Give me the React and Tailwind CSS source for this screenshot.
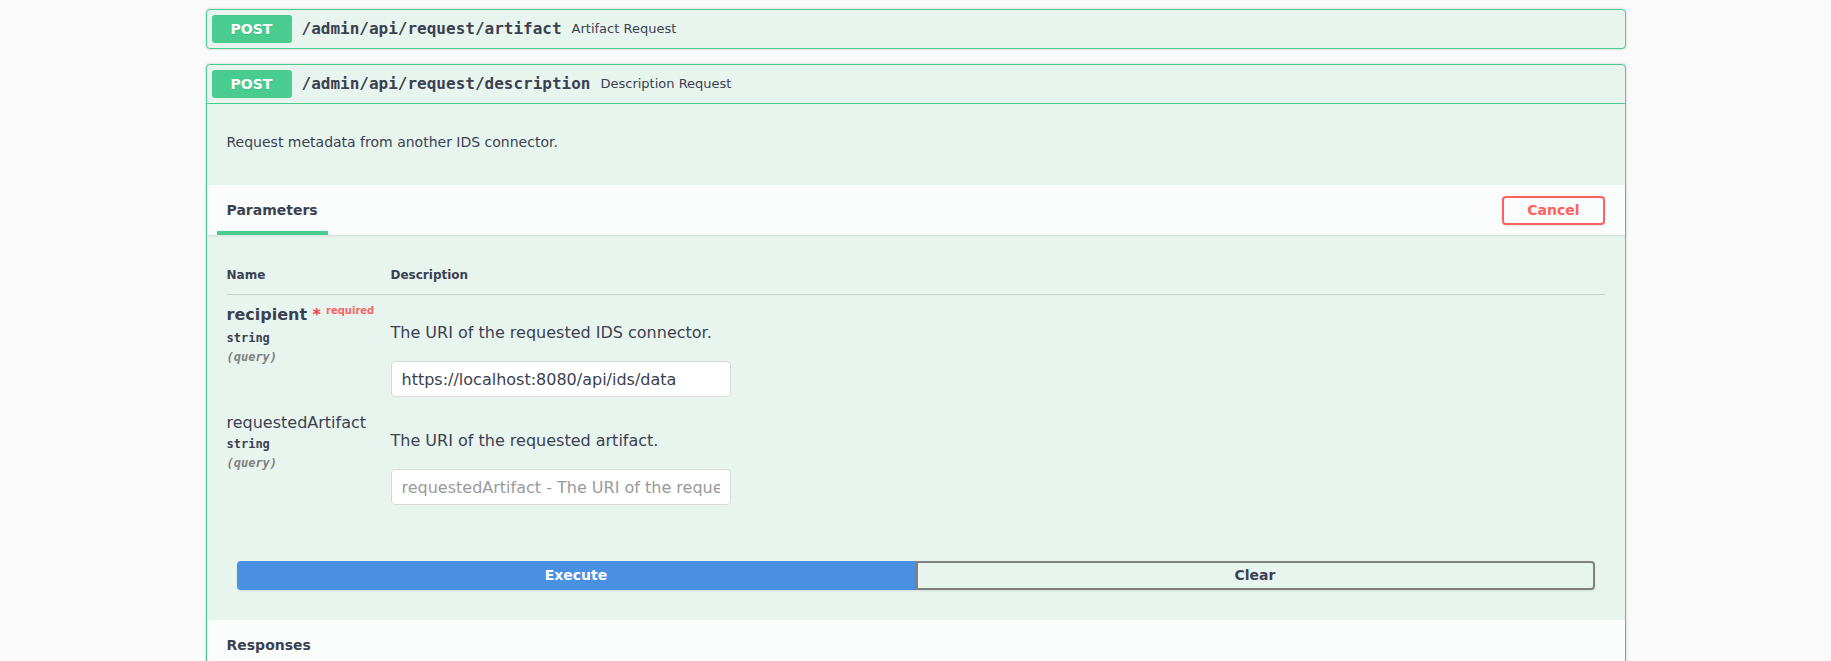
import React from 'react';

const sans = 'font-["DejaVu_Sans",sans-serif]';
const mono = 'font-["DejaVu_Sans_Mono",monospace]';

function Summary({ path, summary, open }) {
  return (
    <div className={`flex items-center p-[5px] ${open ? 'border-b border-[#49cc90]' : ''}`}>
      <span className={`${sans} min-w-[80px] rounded-[3px] bg-[#49cc90] py-[6px] text-center text-[14px] leading-[16px] font-bold text-white [text-shadow:0_1px_0_rgba(0,0,0,0.1)]`}>
        POST
      </span>
      <span className={`${mono} px-[10px] text-[16px] font-bold text-[#3b4151]`}>{path}</span>
      <span className={`${sans} text-[13px] text-[#3b4151]`}>{summary}</span>
    </div>
  );
}

function ParamRow({ name, required, desc, value, placeholder }) {
  return (
    <tr>
      <td className="w-[164px] pt-[10px] align-top">
        <div className={`${sans} text-[16px] leading-[20px] ${required ? 'font-bold' : ''}`}>
          {name}
          {required && (
            <>
              <span className="text-[#f93e3e]">&nbsp;*</span>
              <span className="relative -top-[6px] px-[5px] text-[10px] font-bold text-[#ff0000]/60">required</span>
            </>
          )}
        </div>
        <div className={`${mono} py-[4px] text-[12px] leading-[14px] font-bold`}>string</div>
        <div className={`${mono} text-[12px] leading-[17px] font-bold italic text-[#808080]`}>(query)</div>
      </td>
      <td className="pt-[10px] align-top">
        <p className={`${sans} mt-[18px] mb-[19px] text-[16px] leading-[19px]`}>{desc}</p>
        <input
          type="text"
          defaultValue={value}
          placeholder={placeholder}
          className={`${sans} mt-[5px] mb-[6px] block h-[36px] w-full max-w-[340px] rounded-[4px] border border-[#d9d9d9] bg-white px-[10px] text-[16px] text-[#3b4151] outline-none placeholder:text-[#9a9a9a]`}
        />
      </td>
    </tr>
  );
}

export default function App() {
  return (
    <div className={`min-h-screen bg-[#fafafa] text-[#3b4151] ${sans}`}>
      <div className="mx-auto max-w-[1460px] px-5 pt-[9px]">
        <div className="mb-[15px] rounded-[4px] border border-[#49cc90] bg-[#e8f5ef] shadow-[0_0_3px_rgba(0,0,0,0.19)]">
          <Summary path="/admin/api/request/artifact" summary="Artifact Request" />
        </div>

        <div className="rounded-[4px] border border-[#49cc90] bg-[#e8f5ef] shadow-[0_0_3px_rgba(0,0,0,0.19)]">
          <Summary path="/admin/api/request/description" summary="Description Request" open />

          <div className="px-5 pt-[30px] pb-[34px]">
            <p className="text-[14px] leading-[17px]">Request metadata from another IDS connector.</p>
          </div>

          <div className="flex h-[50px] items-stretch justify-between bg-white/80 px-5 shadow-[0_1px_2px_rgba(0,0,0,0.1)]">
            <div className="relative -ml-[10px] flex items-center px-[10px]">
              <h4 className="text-[14px] font-bold">Parameters</h4>
              <span className="absolute inset-x-0 bottom-0 h-1 bg-[#49cc90]" />
            </div>
            <div className="flex items-center">
              <button className="rounded-[4px] border-2 border-[#ff6060] px-[23px] py-[5px] text-[14px] leading-[15px] font-bold text-[#ff6060] shadow-[0_1px_2px_rgba(0,0,0,0.1)]">
                Cancel
              </button>
            </div>
          </div>

          <div className="px-5 pt-[21px] pb-5">
            <table className="w-full border-collapse text-left">
              <thead>
                <tr className="border-b border-[#3b4151]/20">
                  <th className="w-[164px] py-3 text-[12px] leading-[14px] font-bold">Name</th>
                  <th className="py-3 text-[12px] leading-[14px] font-bold">Description</th>
                </tr>
              </thead>
              <tbody>
                <ParamRow
                  name="recipient"
                  required
                  desc="The URI of the requested IDS connector."
                  value="https://localhost:8080/api/ids/data"
                />
                <ParamRow
                  name="requestedArtifact"
                  desc="The URI of the requested artifact."
                  placeholder="requestedArtifact - The URI of the requested artifact."
                />
              </tbody>
            </table>
          </div>

          <div className="flex px-[30px] pt-[30px] pb-[30px]">
            <button className="flex-1 rounded-l-[4px] border-2 border-[#4990e2] bg-[#4990e2] py-[5px] text-[14px] leading-[15px] font-bold text-white shadow-[0_1px_2px_rgba(0,0,0,0.1)]">
              Execute
            </button>
            <button className="flex-1 rounded-r-[4px] border-2 border-[#808080] bg-transparent py-[5px] text-[14px] leading-[15px] font-bold text-[#3b4151] shadow-[0_1px_2px_rgba(0,0,0,0.1)]">
              Clear
            </button>
          </div>

          <div className="flex h-[50px] items-center bg-white/80 px-5 shadow-[0_1px_2px_rgba(0,0,0,0.1)]">
            <h4 className="text-[14px] font-bold">Responses</h4>
          </div>
          <div className="h-[120px]" />
        </div>
      </div>
    </div>
  );
}
